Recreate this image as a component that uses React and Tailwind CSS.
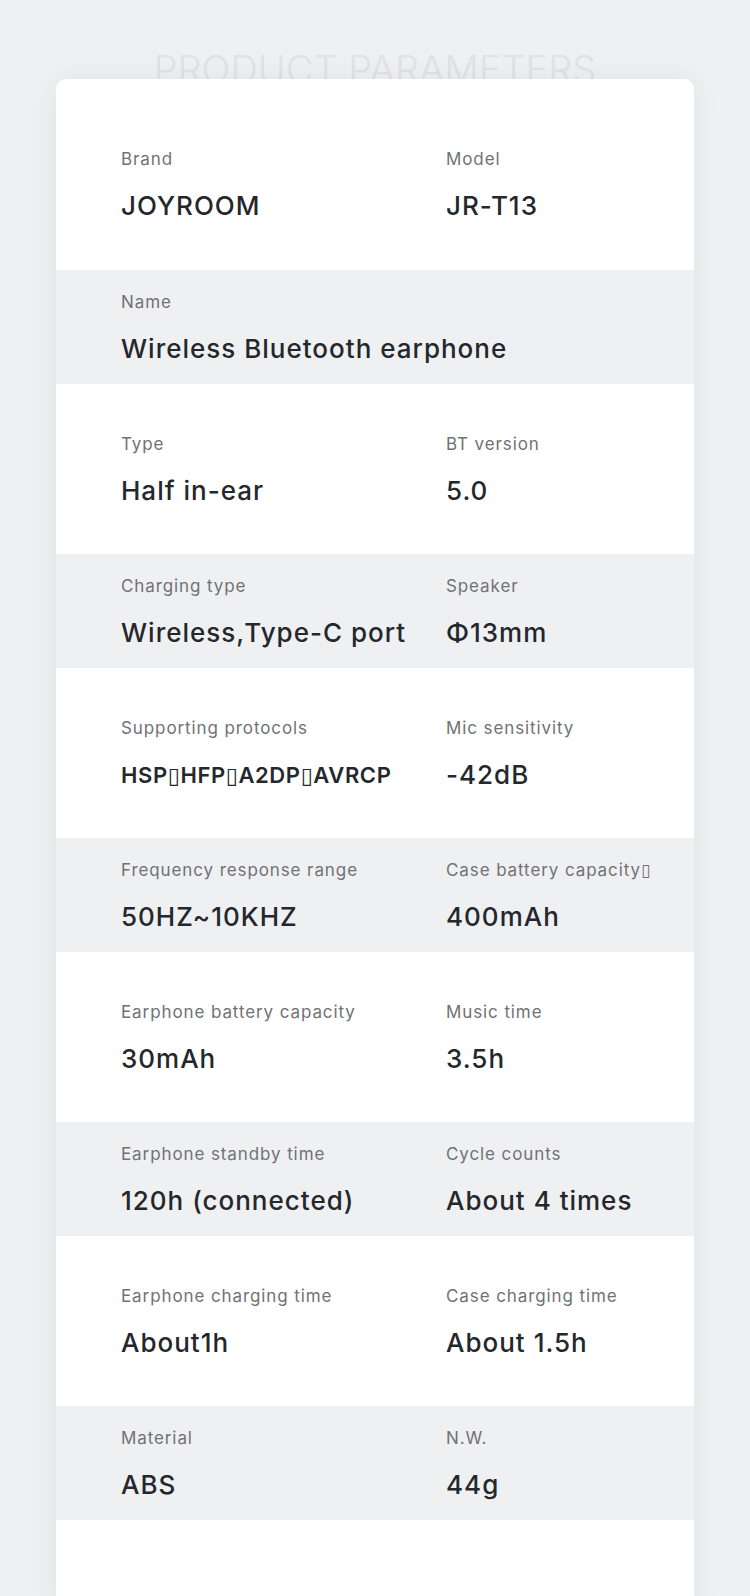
import React from "react";

const rows = [
  { bg: "first", items: [["Brand", "JOYROOM"], ["Model", "JR-T13"]] },
  { bg: "gray", items: [["Name", "Wireless Bluetooth earphone"]] },
  { bg: "white", items: [["Type", "Half in-ear"], ["BT version", "5.0"]] },
  { bg: "gray", items: [["Charging type", "Wireless,Type-C port"], ["Speaker", "Φ13mm"]] },
  { bg: "white", items: [["Supporting protocols", "HSP▯HFP▯A2DP▯AVRCP", true], ["Mic sensitivity", "-42dB"]] },
  { bg: "gray", items: [["Frequency response range", "50HZ~10KHZ"], ["Case battery capacity▯", "400mAh"]] },
  { bg: "white", items: [["Earphone battery capacity", "30mAh"], ["Music time", "3.5h"]] },
  { bg: "gray", items: [["Earphone standby time", "120h (connected)"], ["Cycle counts", "About 4 times"]] },
  { bg: "white", items: [["Earphone charging time", "About1h"], ["Case charging time", "About 1.5h"]] },
  { bg: "gray", items: [["Material", "ABS"], ["N.W.", "44g"]] },
];

function Cell({ label, value, small, span }) {
  return (
    <div className={span ? "col-span-2" : ""}>
      <div className="pt-[22px] text-[17px] leading-[20px] tracking-[0.9px] text-[#707276] whitespace-nowrap">{label}</div>
      {small ? (
        <div className="mt-[24px] text-[22px] leading-[26px] font-semibold tracking-[0.6px] text-[#24272b] whitespace-nowrap">{value}</div>
      ) : (
        <div className="mt-[21px] text-[26px] leading-[32px] font-medium tracking-[1px] text-[#24272b] whitespace-nowrap">{value}</div>
      )}
    </div>
  );
}

function Row({ row }) {
  const wrap =
    row.bg === "gray"
      ? "bg-[#eff0f2]"
      : row.bg === "first"
      ? "bg-white pt-[48px] pb-[28px]"
      : "bg-white py-[27.5px]";
  return (
    <div className={wrap}>
      <div className="grid grid-cols-[325px_1fr] pl-[65px] h-[114.5px]">
        {row.items.map((it, i) => (
          <Cell key={i} label={it[0]} value={it[1]} small={it[2]} span={row.items.length === 1} />
        ))}
      </div>
    </div>
  );
}

export default function App() {
  return (
    <div
      className="w-[750px] h-[1596px] overflow-hidden bg-[#eff0f2]"
      style={{ fontFamily: "Inter, 'DejaVu Sans', sans-serif" }}
    >
      <div className="h-[79px] pt-[50px] text-center">
        <div className="text-[38px] leading-[38px] font-light text-[#e1e2e5] whitespace-nowrap">
          PRODUCT PARAMETERS
        </div>
      </div>
      <div className="relative mx-[56px] rounded-[10px] overflow-hidden bg-white shadow-[0_0_30px_rgba(0,0,0,0.06)] h-[1540px]">
        {rows.map((r, i) => (
          <Row key={i} row={r} />
        ))}
      </div>
    </div>
  );
}
